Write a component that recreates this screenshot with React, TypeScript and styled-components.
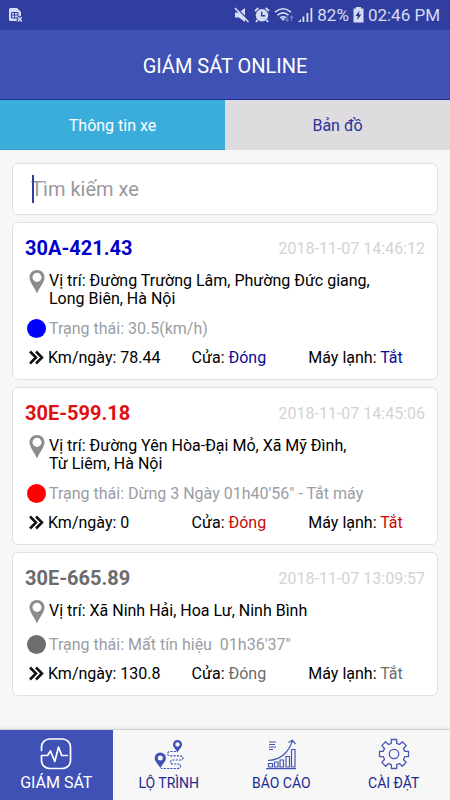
import React from 'react';
import styled, { createGlobalStyle } from 'styled-components';

const GlobalStyle = createGlobalStyle`
  *, *::before, *::after { box-sizing: border-box; }
  body { margin: 0; background: #f6f6f6; font-family: Roboto, "Noto Sans", sans-serif; }
  button, input { font: inherit; }
`;

const Screen = styled.div`
  display: flex;
  flex-direction: column;
  min-height: 100vh;
  background: #f7f7f7;
`;

const StatusBar = styled.div`
  display: flex;
  align-items: center;
  justify-content: space-between;
  height: 30px;
  padding: 0 10px 0 9px;
  background: #303f9f;
  color: #d5dcf6;
  font-size: 17px;
`;

const StatusGroup = styled.div`
  display: flex;
  align-items: center;
  gap: 4px;
  white-space: nowrap;
`;

const Header = styled.header`
  display: flex;
  align-items: center;
  justify-content: center;
  height: 70px;
  padding-top: 2px;
  background: #3f51b5;
  border-bottom: 1px solid #1c2f96;
`;

const Title = styled.h1`
  margin: 0;
  color: #fff;
  font-size: 20px;
  font-weight: 400;
`;

const Tabs = styled.div`
  display: grid;
  grid-template-columns: 1fr 1fr;
`;

const Tab = styled.button<{ $active?: boolean }>`
  height: 50px;
  padding: 2px 0 0;
  border: 0;
  border-bottom: 1px solid ${(p) => (p.$active ? '#2f9fca' : '#dedcde')};
  background: ${(p) => (p.$active ? '#3badda' : '#dedcde')};
  color: ${(p) => (p.$active ? '#fff' : '#26349c')};
  font-size: 16px;
`;

const Content = styled.main`
  display: flex;
  flex: 1;
  flex-direction: column;
  gap: 7px;
  padding: 13px 12px;
`;

const SearchBox = styled.label`
  position: relative;
  display: block;
  height: 52px;
  border: 1px solid #e0e0e0;
  border-radius: 6px;
  background: #fff;
`;

const SearchInput = styled.input`
  width: 100%;
  height: 100%;
  padding: 0 18px;
  border: 0;
  outline: 0;
  background: transparent;
  color: #000;
  font-size: 20px;
  caret-color: transparent;
  &::placeholder { color: #999; opacity: 1; }
`;

const Caret = styled.span`
  position: absolute;
  left: 19px;
  top: 11px;
  width: 2px;
  height: 28px;
  background: #303f9f;
`;

const Card = styled.article`
  padding: 13px 12px 12px;
  border: 1px solid #e0e0e0;
  border-radius: 6px;
  background: #fff;
  color: #000;
  font-size: 16px;
  line-height: 18px;
`;

const CardHead = styled.div`
  display: flex;
  align-items: center;
  justify-content: space-between;
  height: 24px;
  margin-bottom: 10px;
`;

const Plate = styled.h2<{ $color: string }>`
  margin: 0;
  color: ${(p) => p.$color};
  font-size: 20px;
  font-weight: 700;
`;

const Stamp = styled.time`
  padding-top: 2px;
  color: #d3d3d6;
  font-size: 16px;
`;

const Location = styled.div`
  display: grid;
  grid-template-columns: 24px 1fr;
  min-height: 24px;
  margin-bottom: 11px;
`;

const Address = styled.p`
  margin: 0;
  padding-top: 2px;
  white-space: pre-line;
`;

const State = styled.div`
  display: grid;
  grid-template-columns: 24px 1fr;
  align-items: center;
  height: 18px;
  margin-bottom: 12px;
  color: #9a9da6;
  white-space: pre;
`;

const Dot = styled.span<{ $color: string }>`
  width: 19px;
  height: 19px;
  margin-left: 2px;
  border-radius: 50%;
  background: ${(p) => p.$color};
`;

const Stats = styled.div`
  display: grid;
  grid-template-columns: 23px 16fr 13fr 13fr;
  align-items: center;
  height: 18px;
  white-space: nowrap;
`;

const Value = styled.span<{ $color: string }>`
  color: ${(p) => p.$color};
`;

const BottomNav = styled.nav`
  display: grid;
  grid-template-columns: repeat(4, 1fr);
  height: 71px;
  border-top: 1px solid #d2d2d2;
  background: #f7f7f7;
  box-shadow: 0 -1px 4px rgba(0, 0, 0, 0.08);
`;

const NavItem = styled.button<{ $active?: boolean }>`
  display: flex;
  flex-direction: column;
  align-items: center;
  gap: 4px;
  padding: 8px 0 0;
  border: 0;
  background: ${(p) => (p.$active ? '#3f51b5' : 'transparent')};
  color: ${(p) => (p.$active ? '#fff' : '#1b2a8f')};
  font-size: ${(p) => (p.$active ? '16px' : '14px')};
  line-height: 18px;
`;

const SimIcon = () => (
  <svg width="14" height="16" viewBox="0 0 14 16" aria-hidden="true">
    <path d="M1.5 1H8l4 4v5.2l-1.8-.4L8 14H1.5C.8 14 0 13.500 0 12.500V2.500C0 1.600.8 1 1.500 1z" fill="#d5dcf6" />
    <path d="M2.500 5.500h6.500v5.500H2.500zM5.500 5.500V11M2.500 8h6.500" fill="none" stroke="#303f9f" />
    <path d="M8.500 10l4.500 5M13 10l-4.500 5" stroke="#303f9f" strokeWidth="3.400" />
    <path d="M8.700 10.200l4.100 4.300M12.800 10.200l-4.100 4.300" stroke="#d5dcf6" strokeWidth="1.500" />
  </svg>
);

const MuteIcon = () => (
  <svg width="16" height="16" viewBox="0 0 16 16" aria-hidden="true">
    <path d="M1 5.500h4l6-4.500v14l-6-4.500H1z" fill="#d5dcf6" />
    <path d="M2.500 1L15 14" stroke="#303f9f" strokeWidth="1.600" />
    <path d="M1 1l13.500 14" stroke="#d5dcf6" strokeWidth="1.600" />
  </svg>
);

const AlarmIcon = () => (
  <svg width="16" height="16" viewBox="0 0 16 16" aria-hidden="true">
    <path d="M1 4L4.300 1M15 4l-3.300-3M3.500 13L2 15M12.500 13l1.500 2" stroke="#d5dcf6" strokeWidth="1.800" />
    <circle cx="8" cy="8.300" r="6.200" fill="#d5dcf6" />
    <path d="M7.700 4.800v4h3.500" fill="none" stroke="#303f9f" strokeWidth="1.400" />
  </svg>
);

const WifiIcon = () => (
  <svg width="20" height="16" viewBox="0 0 20 16" aria-hidden="true">
    <g fill="none" stroke="#d5dcf6" strokeWidth="1.600">
      <path d="M1 5.200Q9 -1.700 17 5.200" />
      <path d="M3.500 8.200Q9 3.500 14.500 8.200" />
      <path d="M6 11Q9 8.500 12 11" />
    </g>
    <path d="M7 11.500Q9 10.300 11 11.500L9 14z" fill="#d5dcf6" />
    <path d="M13 9v5M11.300 12.300l1.700 1.900 1.700-1.900M17.500 14V9M15.800 10.900L17.500 9l1.700 1.900" fill="none" stroke="#6f7ec6" strokeWidth="1.100" />
  </svg>
);

const SignalIcon = () => (
  <svg width="15" height="16" viewBox="0 0 15 16" aria-hidden="true">
    <path d="M0 15l3-3v3zM4.500 15V9.500h1.800V15zM8.500 15V6h1.800v9zM12.500 15V1h1.800v14z" fill="#d5dcf6" />
  </svg>
);

const BatteryIcon = () => (
  <svg width="11" height="16" viewBox="0 0 11 16" aria-hidden="true">
    <path d="M3 0h5v1.500h2.500V15.500H.5V1.500H3z" fill="#d5dcf6" />
    <path d="M6.500 3.500L2.500 9h2.300l-.6 4 4-5.500H5.900z" fill="#26347f" />
  </svg>
);

const PinIcon = () => (
  <svg width="24" height="24" viewBox="0 0 24 24" aria-hidden="true">
    <path fillRule="evenodd" d="M12 0C7.700 0 4.500 3.200 4.500 7.200 4.500 12.500 9.500 17 12 23.500 14.500 17 19.500 12.500 19.500 7.200 19.500 3.200 16.300 0 12 0zM12 2.800a4.500 4.500 0 1 1 0 9.100 4.500 4.500 0 0 1 0-9.100z" fill="#8c8c8c" />
  </svg>
);

const ChevronsIcon = () => (
  <svg width="19" height="16" viewBox="0 0 19 16" aria-hidden="true">
    <path d="M5 1.500L11 7.500l-6 6M11 1.500l6 6-6 6" fill="none" stroke="#111" strokeWidth="2.500" />
  </svg>
);

const PulseIcon = () => (
  <svg width="32" height="32" viewBox="0 0 32 32" fill="none" stroke="#fff" strokeWidth="1.700" aria-hidden="true">
    <path d="M1.500 12.500V9a8 8 0 0 1 8-8h13a8 8 0 0 1 8 8v13.500a8 8 0 0 1-8 8h-13a8 8 0 0 1-8-8V17.500h6l3-4.500 4.300 10.500L18.500 9l3.200 8.500h5.500" strokeLinecap="round" strokeLinejoin="round" />
  </svg>
);

const RouteIcon = () => (
  <svg width="32" height="32" viewBox="0 0 32 32" aria-hidden="true">
    <path fillRule="evenodd" d="M24.500 2a4.500 4.500 0 0 0-4.500 4.600c0 3 3 4.600 4.500 8.200 1.500-3.600 4.500-5.200 4.500-8.200A4.500 4.500 0 0 0 24.500 2zm0 2.200a2.200 2.200 0 1 1 0 4.400 2.200 2.200 0 0 1 0-4.400z" fill="#3f51b5" />
    <path fillRule="evenodd" d="M7.300 14.500a5.500 5.500 0 0 0-5.600 5.600c0 4 4 6 5.600 10.200 1.600-4.200 5.600-6.200 5.600-10.200a5.500 5.500 0 0 0-5.600-5.600zm0 2.900a2.500 2.500 0 1 1 0 5 2.500 2.500 0 0 1 0-5z" fill="#3f51b5" />
    <path d="M23 13.500h-5.500c-4 0-4 4.300 0 4.300H27c4 0 4 4.200 0 4.200h-7c-3.500 0-3.500 4 0 4h4.500c4 0 4 4.500 0 4.500H8" fill="none" stroke="#3f51b5" strokeWidth="1.200" strokeDasharray="2.200 1.100" />
  </svg>
);

const ReportIcon = () => (
  <svg width="32" height="32" viewBox="0 0 32 32" fill="none" stroke="#4555b6" strokeWidth="1.200" aria-hidden="true">
    <path d="M1 30.700h30M4 4h7M4 6.500h6M4 9h7M4 11.500h4" />
    <path d="M3.500 25.500h4v3.500h-4zM9.500 24h3.500v5H9.500zM15 22h3.500v7H15zM21 18.500h3.500V29H21zM26.500 11.500H30V29h-3.500z" />
    <path d="M3 22.500C14 22 23 16 27.500 2.500M23.500 4.500l4-2.200 3 3.800" />
  </svg>
);

const GearIcon = () => (
  <svg width="32" height="32" viewBox="0 0 32 32" fill="none" stroke="#4555b6" strokeWidth="1.300" strokeLinejoin="round" aria-hidden="true">
    <circle cx="16" cy="16" r="4.700" />
    <path d="M13.300 1.500h5.400v3.800l2.800 1.200 2.900-2.700 3.800 3.800-2.700 2.900 1.200 2.800h3.800v5.400h-3.800l-1.200 2.800 2.700 2.900-3.800 3.800-2.900-2.700-2.800 1.200v3.800h-5.400v-3.800l-2.800-1.200-2.900 2.700-3.800-3.800 2.700-2.900-1.200-2.800H1.500v-5.400h3.800l1.200-2.800-2.700-2.900 3.800-3.800 2.900 2.700 2.800-1.200z" />
  </svg>
);

type Vehicle = {
  plate: string;
  plateColor: string;
  dotColor: string;
  valueColor: string;
  stamp: string;
  address: string;
  state: string;
  km: string;
};

const vehicles: Vehicle[] = [
  {
    plate: '30A-421.43', plateColor: '#0000c8', dotColor: '#0000ff', valueColor: '#0a0a9c',
    stamp: '2018-11-07 14:46:12',
    address: 'Đường Trường Lâm, Phường Đức giang,\nLong Biên, Hà Nội',
    state: '30.5(km/h)', km: '78.44',
  },
  {
    plate: '30E-599.18', plateColor: '#e01010', dotColor: '#ff0000', valueColor: '#c80a0a',
    stamp: '2018-11-07 14:45:06',
    address: 'Đường Yên Hòa-Đại Mỏ, Xã Mỹ Đình,\nTừ Liêm, Hà Nội',
    state: 'Dừng 3 Ngày 01h40\'56" - Tắt máy', km: '0',
  },
  {
    plate: '30E-665.89', plateColor: '#6b6b6b', dotColor: '#6e6e6e', valueColor: '#6b6b6b',
    stamp: '2018-11-07 13:09:57',
    address: 'Xã Ninh Hải, Hoa Lư, Ninh Bình',
    state: 'Mất tín hiệu  01h36\'37"', km: '130.8',
  },
];

const VehicleCard = ({ v }: { v: Vehicle }) => (
  <Card>
    <CardHead>
      <Plate $color={v.plateColor}>{v.plate}</Plate>
      <Stamp>{v.stamp}</Stamp>
    </CardHead>
    <Location>
      <PinIcon />
      <Address>{`Vị trí: ${v.address}`}</Address>
    </Location>
    <State>
      <Dot $color={v.dotColor} />
      <span>{`Trạng thái: ${v.state}`}</span>
    </State>
    <Stats>
      <ChevronsIcon />
      <span>{`Km/ngày: ${v.km}`}</span>
      <span>Cửa: <Value $color={v.valueColor}>Đóng</Value></span>
      <span>Máy lạnh: <Value $color={v.valueColor}>Tắt</Value></span>
    </Stats>
  </Card>
);

export default function App() {
  return (
    <Screen>
      <GlobalStyle />
      <StatusBar>
        <SimIcon />
        <StatusGroup>
          <MuteIcon />
          <AlarmIcon />
          <WifiIcon />
          <SignalIcon />
          <span>82%</span>
          <BatteryIcon />
          <span>02:46 PM</span>
        </StatusGroup>
      </StatusBar>
      <Header>
        <Title>GIÁM SÁT ONLINE</Title>
      </Header>
      <Tabs>
        <Tab type="button" $active>Thông tin xe</Tab>
        <Tab type="button">Bản đồ</Tab>
      </Tabs>
      <Content>
        <SearchBox>
          <SearchInput type="text" placeholder="Tìm kiếm xe" aria-label="Tìm kiếm xe" />
          <Caret />
        </SearchBox>
        {vehicles.map((v) => <VehicleCard key={v.plate} v={v} />)}
      </Content>
      <BottomNav>
        <NavItem type="button" $active><PulseIcon />GIÁM SÁT</NavItem>
        <NavItem type="button"><RouteIcon />LỘ TRÌNH</NavItem>
        <NavItem type="button"><ReportIcon />BÁO CÁO</NavItem>
        <NavItem type="button"><GearIcon />CÀI ĐẶT</NavItem>
      </BottomNav>
    </Screen>
  );
}
